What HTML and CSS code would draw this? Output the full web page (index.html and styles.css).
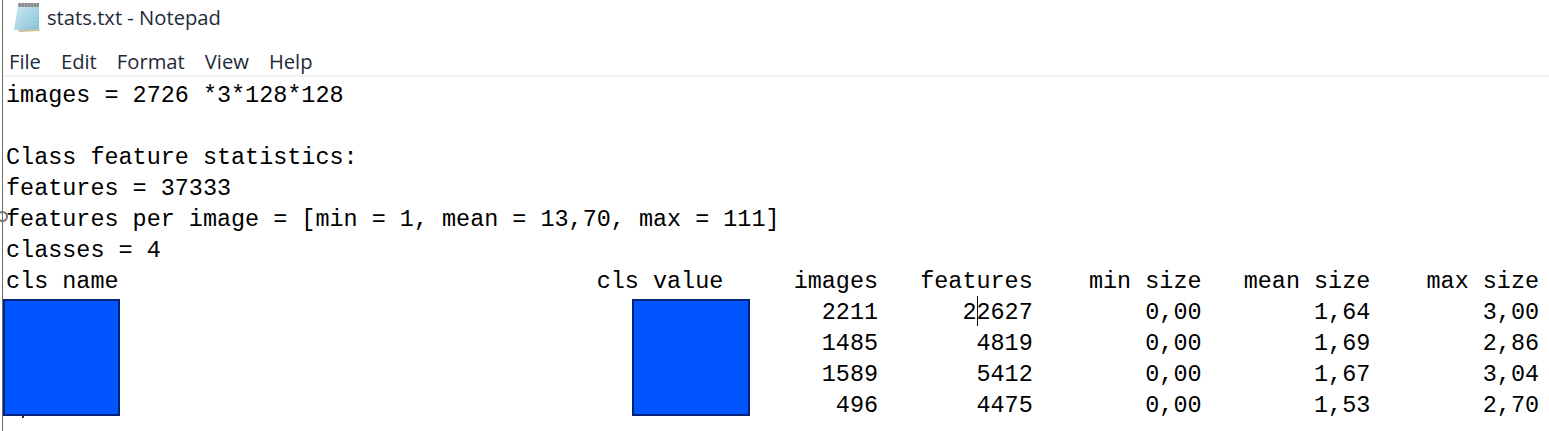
FILE: index.html
```html
<!DOCTYPE html>
<html lang="en">
<head>
    <meta charset="UTF-8">
    <meta name="viewport" content="width=device-width, initial-scale=1.0">
    <title>stats.txt - Notepad</title>
    <link rel="stylesheet" href="styles.css">
</head>
<body>
    <div class="window">
        <div class="title-bar">
            <svg class="app-icon" width="28" height="30" viewBox="0 0 28 30">
                <defs>
                    <linearGradient id="page" x1="0" y1="0" x2="1" y2="1">
                        <stop offset="0" stop-color="#d3edf3"/>
                        <stop offset="1" stop-color="#7fbfd4"/>
                    </linearGradient>
                </defs>
                <path d="M5 27 L26 26 L27 29 L6 30 Z" fill="#cdbf9f"/>
                <path d="M5 3 L26 3 L26 27 L1 28 Q3 16 5 3 Z" fill="url(#page)"/>
                <path d="M5 1 H26 V5 H5 Z" fill="#a6a6a6"/>
                <path d="M7 1 V5 M10 1 V5 M13 1 V5 M16 1 V5 M19 1 V5 M22 1 V5 M25 1 V5" stroke="#6c6c6c" stroke-width="1"/>
                <path d="M8 10 H24 M7 14 H24 M7 18 H24 M6 22 H24" stroke="#a8d6e3" stroke-width="1"/>
            </svg>
            <span class="title-text">stats.txt - Notepad</span>
        </div>
        <div class="menu-bar">
            <span>File</span>
            <span>Edit</span>
            <span>Format</span>
            <span>View</span>
            <span>Help</span>
        </div>
        <pre class="content">images = 2726 *3*128*128

Class feature statistics:
features = 37333
features per image = [min = 1, mean = 13,70, max = 111]
classes = 4
cls name                                  cls value     images   features    min size   mean size    max size
                                                          2211      22627        0,00        1,64        3,00
                                                          1485       4819        0,00        1,69        2,86
                                                          1589       5412        0,00        1,67        3,04
                                                           496       4475        0,00        1,53        2,70</pre>
        <div class="caret"></div>
        <div class="redact redact-name"></div>
        <div class="redact redact-value"></div>
        <div class="ring"></div>
        <div class="speck"></div>
    </div>
</body>
</html>
```

FILE: styles.css
```css
html, body {
    margin: 0;
    height: 431px;
    overflow: hidden;
    background-color: #fff;
}
.window {
    position: relative;
    height: 431px;
    margin-left: 2px;
    border-left: 1px solid #6e6e6e;
    color: #000;
}
.title-bar {
    display: flex;
    align-items: center;
    gap: 6px;
    height: 34px;
    padding-left: 10px;
    font-family: "Open Sans", sans-serif;
    font-size: 20.2px;
}
.title-text {
    color: #1e2a38;
}
.menu-bar {
    display: flex;
    gap: 20px;
    height: 43px;
    box-sizing: border-box;
    padding: 14px 0 0 6px;
    border-bottom: 2px solid #f0f0f0;
    font-family: "Open Sans", sans-serif;
    font-size: 20.2px;
    line-height: 26px;
    color: #1e2a38;
}
.content {
    margin: 0;
    padding: 3px 0 0 3px;
    font-family: "Liberation Mono", monospace;
    font-size: 23.45px;
    line-height: 31px;
}
.caret {
    position: absolute;
    top: 296px;
    left: 974px;
    width: 1px;
    height: 30px;
    background-color: #111;
}
.redact {
    position: absolute;
    top: 299px;
    box-sizing: border-box;
    height: 117px;
    background-color: #0055ff;
    border: 2px solid #03227a;
}
.redact-name {
    left: 0;
    width: 117px;
}
.redact-value {
    left: 629px;
    width: 118px;
}
.ring {
    position: absolute;
    top: 211px;
    left: -6px;
    box-sizing: border-box;
    width: 11px;
    height: 11px;
    border: 2px solid #777;
    border-radius: 50%;
}
.speck {
    position: absolute;
    top: 416px;
    left: 19px;
    width: 2px;
    height: 2px;
    background-color: #333;
}
```
